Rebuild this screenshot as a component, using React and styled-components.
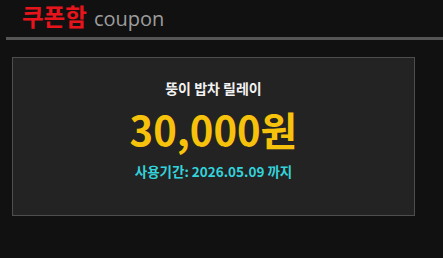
import React from "react";
import styled, { createGlobalStyle } from "styled-components";

const GlobalStyle = createGlobalStyle`
  html, body {
    margin: 0;
    padding: 0;
    background: #121112;
  }
  body {
    font-family: "Noto Sans CJK KR", "Noto Sans", sans-serif;
    width: 443px;
    height: 258px;
    overflow: hidden;
  }
`;

const Page = styled.div`
  width: 443px;
  height: 258px;
  background: #121112;
`;

const Header = styled.div`
  display: flex;
  align-items: baseline;
  gap: 7px;
  height: 37px;
  padding-left: 22px;
  box-sizing: border-box;
`;

const Title = styled.h1`
  margin: 0;
  font-size: 23.5px;
  font-weight: 700;
  color: #e8141c;
  line-height: 32px;
`;

const SubTitle = styled.span`
  font-family: "Open Sans", "Noto Sans", sans-serif;
  font-size: 20px;
  font-weight: 400;
  color: #9d9d9d;
`;

const Divider = styled.div`
  height: 3px;
  margin-left: 6px;
  background: #555;
`;

const Card = styled.div`
  display: flex;
  flex-direction: column;
  align-items: center;
  width: 403px;
  height: 159px;
  margin: 17px 0 0 12px;
  box-sizing: border-box;
  border: 1px solid #4e4e4e;
  background: #232323;
  padding-top: 20px;
`;

const CouponName = styled.div`
  font-size: 14px;
  font-weight: 700;
  color: #f2f2f2;
  line-height: 20px;
`;

const Amount = styled.div`
  font-size: 40px;
  font-weight: 700;
  color: #f7c20c;
  line-height: 50px;
  margin-top: 6px;
`;

const Period = styled.div`
  font-size: 13.5px;
  font-weight: 700;
  color: #33d3dc;
  line-height: 20px;
  margin-top: 7px;
`;

export default function App() {
  return (
    <Page>
      <GlobalStyle />
      <Header>
        <Title>쿠폰함</Title>
        <SubTitle>coupon</SubTitle>
      </Header>
      <Divider />
      <Card>
        <CouponName>뚱이 밥차 릴레이</CouponName>
        <Amount>30,000원</Amount>
        <Period>사용기간: 2026.05.09 까지</Period>
      </Card>
    </Page>
  );
}
